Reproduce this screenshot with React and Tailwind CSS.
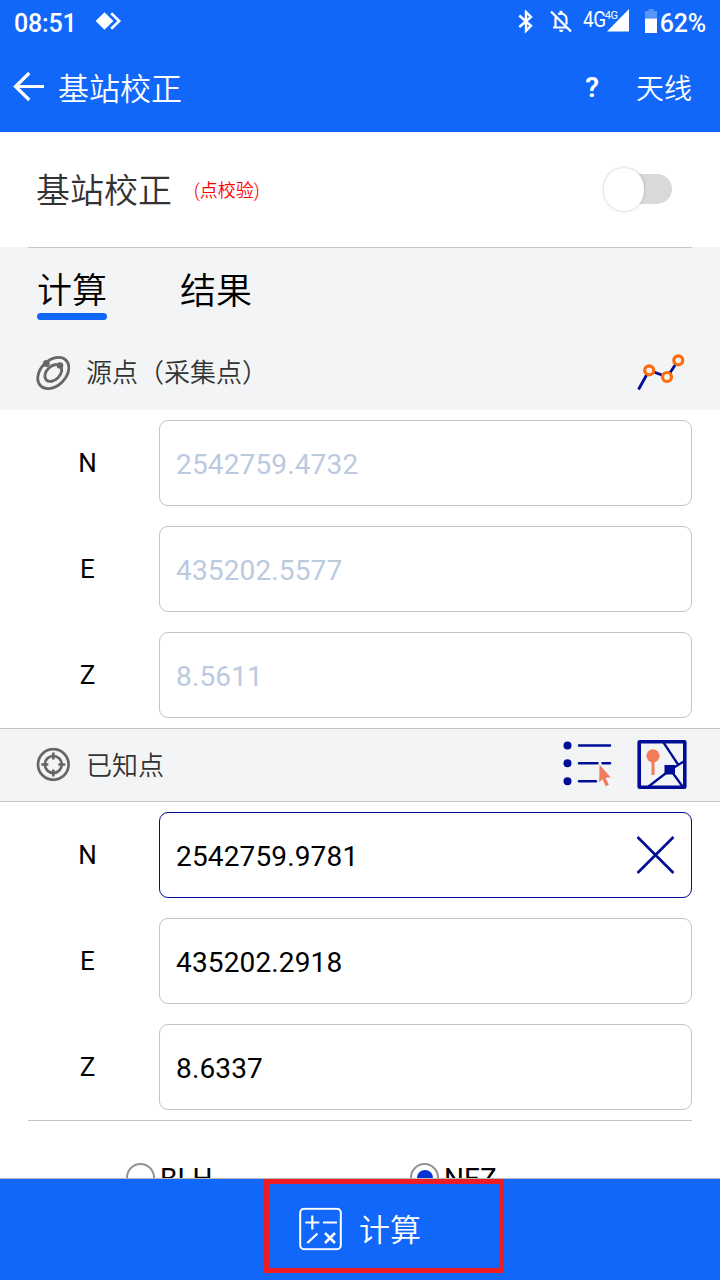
const SOURCE_POINT = [
  { key: 'N', value: '2542759.4732' },
  { key: 'E', value: '435202.5577' },
  { key: 'Z', value: '8.5611' },
];

const KNOWN_POINT = [
  { key: 'N', value: '2542759.9781', active: true },
  { key: 'E', value: '435202.2918' },
  { key: 'Z', value: '8.6337' },
];

function StatusBar() {
  return (
    <div className="flex h-11 items-center pl-3.5 pr-3.5 text-white">
      <span className="w-[81px] pt-[2px] text-[25px] font-medium leading-none tracking-[-0.2px]">08:51</span>
      <svg className="h-[20px] w-[27px]" viewBox="0 0 27 20" fill="none">
        <path d="M9.5 .3 18.4 9 9.5 17.7.6 9z" fill="#fff" />
        <path d="M16.2 1.2 24.2 9l-8 7.8" stroke="#fff" strokeWidth="2.6" />
      </svg>

      <div className="flex-1" />

      {/* Bluetooth */}
      <svg className="h-6 w-[15px]" viewBox="0 0 15 24" fill="none" stroke="#fff" strokeWidth="2.4">
        <path d="M1.3 5.5 13 15.8l-5 5V2l5 5L1.3 17" />
      </svg>
      {/* Muted bell */}
      <svg className="ml-[17px] h-6 w-[22px]" viewBox="0 0 22 24" fill="none" stroke="#fff" strokeWidth="2.2">
        <path d="M5.5 17V9.2c0-1.2.3-2.2.9-3.1M8.2 4.3c.8-.5 1.7-.7 2.8-.7 3.3 0 5.5 2.500 5.500 5.600v5.300M3 17.500h13.500" />
        <path d="M1 1.5 21 21.5" strokeWidth="2.4" />
        <path d="M11 .8v3" strokeWidth="3" />
        <path d="M9 19.8h4.4c0 1.4-1 2.3-2.2 2.3S9 21.2 9 19.8z" fill="#fff" stroke="none" />
      </svg>
      {/* Signal strength */}
      <div className="relative ml-[11px] flex h-6 w-[46px] items-center">
        <span className="origin-left scale-x-[0.86] pb-1 text-[22px] leading-none tracking-[-0.5px]">4G</span>
        <span className="absolute left-[22px] top-0 text-[11px] leading-none tracking-[-0.4px]">4G</span>
        <svg className="absolute right-0 top-[-1px] h-[23px] w-[22px]" viewBox="0 0 22 23">
          <path d="M22 0v22.5H0z" fill="#fff" />
        </svg>
      </div>
      {/* Battery */}
      <svg className="ml-4 h-6 w-3 -translate-y-px" viewBox="0 0 12 24">
        <path d="M3.5 0h5v2H12v7.5H0V2h3.5z" fill="#fff" opacity=".3" />
        <path d="M0 9.5h12V24H0z" fill="#fff" />
      </svg>
      <span className="ml-[3px] pt-[2px] text-[25px] font-medium leading-none tracking-[-0.2px]">62%</span>
    </div>
  );
}

function TitleBar() {
  return (
    <div className="flex h-[88px] items-center pl-[13px] pr-7 text-white">
      <svg className="h-[30px] w-[31px] -translate-y-[1.5px]" viewBox="0 0 31 30" fill="none" stroke="#fff" strokeWidth="3.2">
        <path d="M16.3 1.5 2.5 15l13.8 13.5M2.5 15H31" />
      </svg>
      <h1 className="ml-[14px] flex-1 pt-[2px] text-[31px] font-[350] leading-none">基站校正</h1>
      <span className="text-[28px] font-semibold leading-none">?</span>
      <span className="ml-[37px] pt-[3px] text-[28px] font-[350] leading-none">天线</span>
    </div>
  );
}

function Toggle() {
  return (
    <button type="button" className="relative h-[44px] w-[70px]">
      <span className="absolute left-3 right-0 top-[6px] h-[30px] rounded-full bg-[#d9d9d9]" />
      <span className="absolute left-[2px] top-0 h-[43px] w-[40px] rounded-full bg-white shadow-[0_0_3px_rgba(0,0,0,0.25)]" />
    </button>
  );
}

function OrbitIcon() {
  return (
    <svg className="h-[34px] w-[34px]" viewBox="0 0 34 34" fill="none" stroke="#666" strokeWidth="2.8">
      <ellipse cx="17.3" cy="17" rx="18" ry="12.6" transform="rotate(-45 17.3 17)" />
      <ellipse cx="17.3" cy="17" rx="9.8" ry="6.7" transform="rotate(-45 17.3 17)" />
      <circle cx="10.3" cy="7.5" r="3.4" fill="#666" stroke="none" />
      <circle cx="24" cy="9.5" r="3.3" fill="#666" stroke="none" />
    </svg>
  );
}

function TargetIcon() {
  return (
    <svg className="h-[34px] w-[34px] -translate-y-[0.5px]" viewBox="0 0 34 34" fill="none" stroke="#666" strokeWidth="2.7">
      <circle cx="17.3" cy="17" r="15.3" />
      <circle cx="17.3" cy="17" r="8.5" />
      <path d="M17.3 5v7M17.3 22v7M5.300 17h7M22.300 17h7" />
    </svg>
  );
}

function PolylineIcon() {
  return (
    <svg className="h-[37px] w-[48px]" viewBox="0 0 48 37" fill="none">
      <path d="M1.5 35.5 12.2 16.3l18 6.7L41.3 6.3" stroke="#000d96" strokeWidth="2.8" />
      <g fill="#f3f4f6" stroke="#ff6a0a" strokeWidth="3.2">
        <circle cx="12.2" cy="16.3" r="4.5" />
        <circle cx="30" cy="23" r="4.5" />
        <circle cx="41.3" cy="6.3" r="4.5" />
      </g>
    </svg>
  );
}

function ListPickIcon() {
  return (
    <svg className="h-[50px] w-[50px]" viewBox="0 0 50 50">
      <g fill="#000d96">
        <circle cx="4.500" cy="6.500" r="4" />
        <circle cx="4.500" cy="24.300" r="4" />
        <circle cx="4.500" cy="42.200" r="4" />
      </g>
      <path d="M16 6.500h31M16 24.300h18.500M39.500 24.300H47M16 42.200h17" stroke="#000d96" strokeWidth="2.5" strokeLinecap="round" />
      <path d="m36.5 25.500 11.200 13-5.200.3 3.400 7-3.200 1.400-3.300-7.200-3.200 3.500z" fill="#f17c5c" />
    </svg>
  );
}

function MapPickIcon() {
  return (
    <svg className="h-[50px] w-[50px]" viewBox="0 0 50 50" fill="none" stroke="#000d96">
      <rect x="2.2" y="2.2" width="45.6" height="45.6" rx="0.5" strokeWidth="3.600" />
      <path d="M26.5 3 41 25M47.5 21.5 33 30.5 11.5 47M34 31l11.5 16" strokeWidth="2.300" />
      <path d="M27.500 25.500h10.500V35H27.500z" fill="#000d96" stroke="none" />
      <circle cx="16" cy="16.300" r="6.600" fill="#f17c5c" stroke="none" />
      <path d="M16 20v15.500" stroke="#f17c5c" strokeWidth="3" />
    </svg>
  );
}

function CalculatorIcon() {
  return (
    <svg className="h-[43px] w-[43px] -translate-y-[0.5px]" viewBox="0 0 43 43" fill="none" stroke="#fff" strokeWidth="2.2">
      <rect x="1.2" y="1.2" width="40.6" height="40.6" rx="4" strokeWidth="2" />
      <path d="M6.3 15h14M13.3 8v14M24 15h14M8.3 35.5 18.5 26" />
      <path d="m26 25.5 10 10M36 25.5l-10 10" strokeWidth="2.5" />
    </svg>
  );
}

function CoordFields({ fields, readOnly }) {
  return (
    <div className="flex flex-col gap-5 py-2.5 pr-7">
      {fields.map(({ key, value, active }) => (
        <div key={key} className="flex h-[86px] items-center">
          <span className="w-[159px] pl-4 text-center text-[26px] leading-none text-black">{key}</span>
          <div
            className={`flex h-full flex-1 items-center justify-between rounded-[9px] border bg-white px-4 ${
              active ? 'border-[#000d96]' : 'border-[#c4c4c4]'
            }`}
          >
            <span
              className={`pt-[3px] text-[28px] leading-none tracking-[0.15px] ${
                readOnly ? 'text-[#bccadf]' : 'text-black'
              }`}
            >
              {value}
            </span>
            {active && (
              <svg className="h-[38px] w-[38px] -translate-x-[0.5px]" viewBox="0 0 38 38" stroke="#000d96" strokeWidth="2.6">
                <path d="m1 1 36 36M37 1 1 37" />
              </svg>
            )}
          </div>
        </div>
      ))}
    </div>
  );
}

function CoordRadio({ label, checked }) {
  return (
    <label className="flex items-center gap-[5px] text-[28px] leading-none">
      <span className="flex h-[29px] w-[29px] items-center justify-center rounded-full border-2 border-[#929292] bg-white">
        {checked && <span className="h-[16px] w-[16px] rounded-full bg-[#0433d2]" />}
      </span>
      <span className="pt-[3px]">{label}</span>
    </label>
  );
}

export default function App() {
  return (
    <div className="flex h-[1280px] w-[720px] flex-col overflow-hidden whitespace-nowrap bg-white font-['Roboto','Noto_Sans_CJK_SC',sans-serif] text-black">
      <header className="h-[132px] shrink-0 bg-[#1067fa]">
        <StatusBar />
        <TitleBar />
      </header>

      <main className="min-h-0 flex-1 overflow-hidden">
        <div className="flex h-[115px] items-center pl-9 pr-12">
          <span className="pt-[2px] text-[34px] font-[350] leading-none text-[#333]">基站校正</span>
          <span className="ml-[22px] flex-1 pt-[3px] text-[18px] font-[350] leading-none text-[#f00]">(点校验)</span>
          <Toggle />
        </div>

        <section className="h-[163px] bg-[#f3f4f6]">
          <div className="mx-7 h-px bg-[#c4c5c8]" />
          {/* Tabs */}
          <div className="flex gap-[73px] pl-[37px] pt-[26px]">
            <button type="button" className="flex flex-col gap-[4px] text-[35px] font-[350] leading-none">
              计算
              <span className="h-[7px] w-full rounded-full bg-[#1067fa]" />
            </button>
            <span className="text-[36px] font-[350] leading-none">结果</span>
          </div>
          <div className="flex h-[74px] items-center pl-9 pr-[35px] pt-[31px]">
            <OrbitIcon />
            <span className="ml-4 flex-1 pt-px text-[26px] font-[350] leading-none text-[#333]">源点（采集点）</span>
            <PolylineIcon />
          </div>
        </section>

        <CoordFields fields={SOURCE_POINT} readOnly />

        <section className="flex h-[74px] items-center border-y border-[#c4c4c4] bg-[#f3f4f6] pl-9 pr-[34px]">
          <TargetIcon />
          <span className="ml-4 flex-1 pt-px text-[26px] font-[350] leading-none text-[#333]">已知点</span>
          <span className="-translate-y-px">
            <ListPickIcon />
          </span>
          <span className="ml-[24px] -translate-y-[0.5px] -mr-px">
            <MapPickIcon />
          </span>
        </section>

        <CoordFields fields={KNOWN_POINT} />

        <div className="mx-7 h-px bg-[#c4c4c4]" />
        <div className="flex pl-[126px] pt-[41px]">
          <div className="w-[284px]">
            <CoordRadio label="BLH" />
          </div>
          <CoordRadio label="NEZ" checked />
        </div>
      </main>

      <footer className="relative flex h-[102px] shrink-0 justify-center border-t border-[#b8b8b8] bg-[#1067fa] text-white">
        <button type="button" className="flex h-[100px] items-center gap-[17px]">
          <CalculatorIcon />
          <span className="pt-[2px] text-[31px] font-[350] leading-none">计算</span>
        </button>
        <div className="absolute left-[264px] top-0 h-[94px] w-[240px] border-[5px] border-[#ee1c25]" />
      </footer>
    </div>
  );
}
